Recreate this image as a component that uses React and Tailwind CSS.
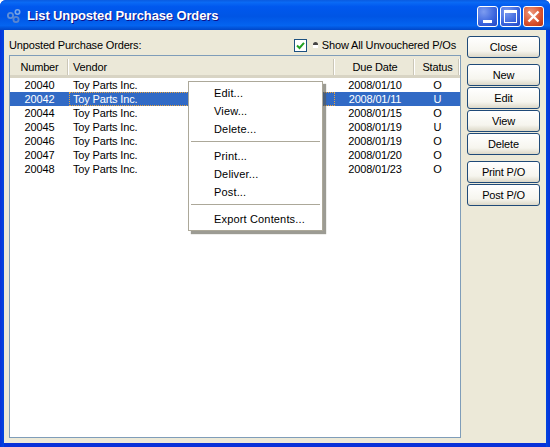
const font = { fontFamily: '"Liberation Sans", sans-serif' };

const rows = [
  ["20040", "O", "2008/01/10"],
  ["20042", "U", "2008/01/11", true],
  ["20044", "O", "2008/01/15"],
  ["20045", "U", "2008/01/19"],
  ["20046", "O", "2008/01/19"],
  ["20047", "O", "2008/01/20"],
  ["20048", "O", "2008/01/23"],
];

function Gears() {
  return (
    <svg width="16" height="16" viewBox="0 0 16 16" fill="none" className="shrink-0 mt-[1px]">
      <circle cx="4.5" cy="7.5" r="2.6" stroke="#5f8fd8" strokeWidth="1.8" />
      <circle cx="11.5" cy="4" r="2.2" stroke="#79a6e6" strokeWidth="1.6" />
      <circle cx="10" cy="11.5" r="2.6" stroke="#5a86cf" strokeWidth="1.8" />
    </svg>
  );
}

function WinButton({ kind }) {
  const bg =
    kind === "close"
      ? "bg-[radial-gradient(circle_at_35%_30%,#ee9a7e,#d8502c_60%,#b93413)]"
      : "bg-[radial-gradient(circle_at_30%_25%,#7d9cf0,#3a64dd_60%,#2347c4)]";
  return (
    <div className={`w-[21px] h-[21px] rounded-[3px] border border-white flex items-center justify-center ${bg}`}>
      {kind === "min" && <div className="w-[9px] h-[3px] bg-white mt-[9px] -ml-[1px]" />}
      {kind === "max" && <div className="w-[13px] h-[13px] border border-white border-t-[3px]" />}
      {kind === "close" && (
        <svg width="13" height="13" viewBox="0 0 13 13">
          <path d="M1.5 1.5 L11.5 11.5 M11.5 1.5 L1.5 11.5" stroke="white" strokeWidth="2.4" />
        </svg>
      )}
    </div>
  );
}

function Btn({ children }) {
  return (
    <div className="w-[73px] h-[22px] pt-[1px] rounded-[3px] border border-[#1f4a78] bg-[linear-gradient(#ffffff,#f6f5ee_70%,#dcd8c8)] flex items-center justify-center text-black">
      {children}
    </div>
  );
}

function Head({ children, sep = true }) {
  return (
    <div className="relative flex items-center justify-center h-full pt-[3px]">
      {children}
      {sep && <div className="absolute right-0 top-[3px] bottom-[1px] w-[2px] border-l border-r border-l-[#cbc7b8] border-r-white" />}
    </div>
  );
}

function Item({ children }) {
  return <div className="h-[18px] pl-[24px] flex items-center text-black">{children}</div>;
}

function Sep() {
  return (
    <div className="h-[9px] px-[1px] pt-[3px]">
      <div className="h-[1px] bg-[#aca899]" />
    </div>
  );
}

export default function App() {
  return (
    <div
      style={font}
      className="relative w-[550px] h-[447px] flex flex-col overflow-hidden rounded-t-[6px] bg-[#0831d9] text-[11px] tracking-[-0.16px] text-black"
    >
      <div className="h-[30px] shrink-0 pl-[6px] pr-[6px] flex items-center gap-[5px] bg-[linear-gradient(#0a5be0,#0a6af5_8%,#0058ee_22%,#0055e5_55%,#0464f0_85%,#0047c8)]">
        <Gears />
        <div className="flex-1 text-white font-bold text-[13px] tracking-[-0.13px] mt-[1px] [text-shadow:1px_1px_#0f1089]">
          List Unposted Purchase Orders
        </div>
        <div className="flex gap-[2px] mt-[3px]">
          <WinButton kind="min" />
          <WinButton kind="max" />
          <WinButton kind="close" />
        </div>
      </div>

      <div className="flex-1 flex min-h-0 px-[4px] pb-[4px] bg-[linear-gradient(90deg,#0831d9,#0046e0_4px,transparent_4px,transparent_546px,#0046e0_546px,#0831d9)]">
        <div className="flex-1 flex bg-[#ece9d8] pl-[5px] pt-[6px] pr-[6px] pb-[5px] gap-[6px]">
          <div className="flex-1 flex flex-col min-w-0">
            <div className="h-[19px] shrink-0 flex items-center">
              <span>Unposted Purchase Orders:</span>
              <div className="ml-auto flex items-center pr-[5px]">
                <div className="w-[13px] h-[13px] border border-[#1c5180] bg-white flex items-center justify-center">
                  <svg width="9" height="9" viewBox="0 0 9 9">
                    <path d="M1 4.5 L3.5 7 L8 1.8" stroke="#21a121" strokeWidth="2" fill="none" />
                  </svg>
                </div>
                <div className="ml-[5px] w-[7px] h-[7px] flex flex-col items-center">
                  <div className="w-[5px] h-[3px] rounded-t-full bg-[#444]" />
                  <div className="w-[5px] h-[3px] bg-white" />
                </div>
                <span className="ml-[3px]">Show All Unvouchered P/Os</span>
              </div>
            </div>

            <div className="flex-1 border border-[#7f9db9] bg-white">
              <div className="h-[22px] grid grid-cols-[59px_266px_80px_45px] bg-[#ebe8d8] border-b-[3px] border-b-[#d8d4c4]">
                <Head>Number</Head>
                <Head><span className="w-full pl-[4px]">Vendor</span></Head>
                <Head>Due Date</Head>
                <Head>Status</Head>
              </div>
              {rows.map(([num, status, date, selected]) => (
                <div
                  key={num}
                  className={`h-[14px] grid grid-cols-[59px_266px_80px_45px] items-start leading-[14px] ${selected ? "bg-[#316ac5] text-white" : ""}`}
                >
                  <div className="text-center">{num}</div>
                  <div className={`h-[14px] pl-[3px] leading-[12px] border border-dotted ${selected ? "border-[#e8a33d]" : "border-transparent"}`}>
                    Toy Parts Inc.
                  </div>
                  <div className="text-center">{date}</div>
                  <div className="text-center">{status}</div>
                </div>
              ))}
            </div>
          </div>

          <div className="w-[73px] shrink-0 flex flex-col">
            <Btn>Close</Btn>
            <div className="mt-[6px] flex flex-col gap-[1px]">
              <Btn>New</Btn>
              <Btn>Edit</Btn>
              <Btn>View</Btn>
              <Btn>Delete</Btn>
            </div>
            <div className="mt-[6px] flex flex-col gap-[1px]">
              <Btn>Print P/O</Btn>
              <Btn>Post P/O</Btn>
            </div>
          </div>
        </div>
      </div>

      <div className="absolute left-[188px] top-[81px] w-[135px] h-[150px] border border-[#aca899] bg-white pt-[2px] px-[1px] tracking-[0.16px] shadow-[3px_3px_1px_rgba(90,88,75,0.6)]">
        <Item>Edit...</Item>
        <Item>View...</Item>
        <Item>Delete...</Item>
        <Sep />
        <Item>Print...</Item>
        <Item>Deliver...</Item>
        <Item>Post...</Item>
        <Sep />
        <Item>Export Contents...</Item>
      </div>
    </div>
  );
}
